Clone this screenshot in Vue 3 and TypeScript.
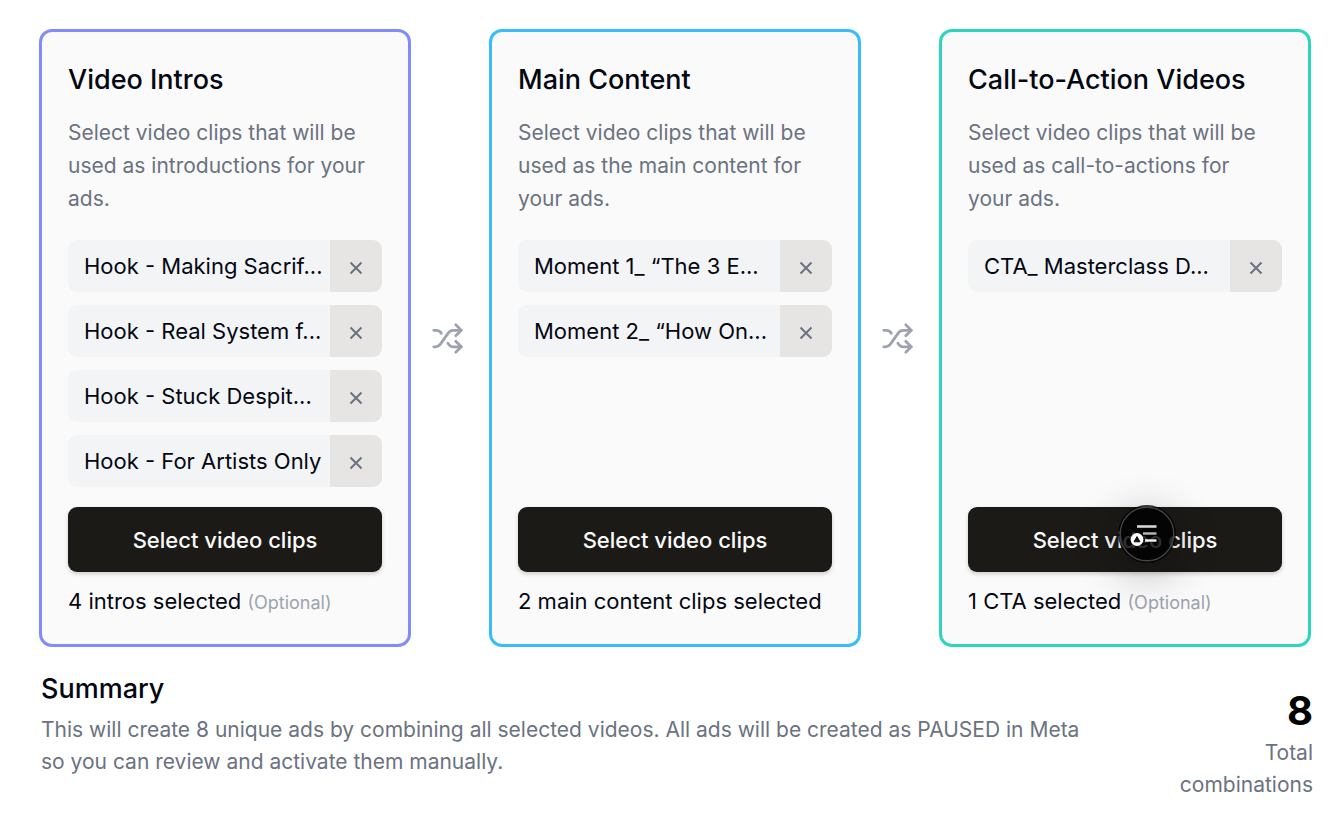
<script setup lang="ts">
interface Step {
  id: string
  title: string
  description: string
  clips: string[]
  status: string
  optional: boolean
}

const steps: Step[] = [
  {
    id: 'intro',
    title: 'Video Intros',
    description: 'Select video clips that will be used as introductions for your ads.',
    clips: [
      'Hook - Making Sacrif...',
      'Hook - Real System f...',
      'Hook - Stuck Despit...',
      'Hook - For Artists Only',
    ],
    status: '4 intros selected',
    optional: true,
  },
  {
    id: 'main',
    title: 'Main Content',
    description: 'Select video clips that will be used as the main content for your ads.',
    clips: ['Moment 1_ “The 3 E...', 'Moment 2_ “How On...'],
    status: '2 main content clips selected',
    optional: false,
  },
  {
    id: 'cta',
    title: 'Call-to-Action Videos',
    description: 'Select video clips that will be used as call-to-actions for your ads.',
    clips: ['CTA_ Masterclass D...'],
    status: '1 CTA selected',
    optional: true,
  },
]
</script>

<template>
  <main class="page">
    <div class="steps">
      <template v-for="(step, index) in steps" :key="step.id">
        <svg v-if="index > 0" class="shuffle" viewBox="0 0 24 24" aria-hidden="true">
          <path d="M2 18h1.4c1.3 0 2.5-.6 3.3-1.7l6.1-8.6c.7-1.1 2-1.7 3.3-1.7H22" />
          <path d="m18 2 4 4-4 4" />
          <path d="M2 6h1.9c1.5 0 2.9.9 3.6 2.2" />
          <path d="M22 18h-5.9c-1.3 0-2.6-.7-3.3-1.8l-.5-.8" />
          <path d="m18 14 4 4-4 4" />
        </svg>
        <section class="card" :class="step.id">
          <h2>{{ step.title }}</h2>
          <p class="description">{{ step.description }}</p>
          <ul class="clips">
            <li v-for="clip in step.clips" :key="clip" class="clip">
              <span class="clip-name">{{ clip }}</span>
              <button type="button" class="remove" :aria-label="`Remove ${clip}`">
                <svg viewBox="0 0 14 14" aria-hidden="true"><path d="M1.5 1.5l11 11M12.5 1.5l-11 11" /></svg>
              </button>
            </li>
          </ul>
          <div class="action">
            <button type="button" class="select">Select video clips</button>
            <button v-if="step.id === 'cta'" type="button" class="assistant" aria-label="Open assistant">
              <svg viewBox="0 0 58 58" aria-hidden="true">
                <circle cx="29" cy="29" r="26.8" fill="none" stroke="#444" stroke-width="1.4" />
                <path d="M19 21.5h19.5" stroke="#d6d6d6" stroke-width="2.6" />
                <path d="M25 28.5h13.5" stroke="#b8b8b8" stroke-width="2.4" />
                <path d="M27 35.5h11.5" stroke="#f4f4f4" stroke-width="2.4" />
                <circle cx="19" cy="34.5" r="6.4" fill="#fff" />
                <path d="M19 31.6l3 5.2h-6z" fill="#111" stroke="#111" stroke-width="1" stroke-linejoin="round" />
              </svg>
            </button>
          </div>
          <p class="status">
            {{ step.status }} <span v-if="step.optional" class="optional">(Optional)</span>
          </p>
        </section>
      </template>
    </div>

    <section class="summary">
      <div>
        <h2>Summary</h2>
        <p>
          This will create 8 unique ads by combining all selected videos. All ads will be created as PAUSED in Meta
          so you can review and activate them manually.
        </p>
      </div>
      <div class="total">
        <strong>8</strong>
        <span>Total combinations</span>
      </div>
    </section>
  </main>
</template>

<style>
body {
  margin: 0;
  background: #fff;
}
</style>

<style scoped>
.page {
  box-sizing: border-box;
  padding: 29px 33px 24px 39px;
  font-family: Inter, "Liberation Sans", sans-serif;
  font-size: 22px;
  line-height: 33px;
  color: #030712;
}

h2,
p,
ul {
  margin: 0;
  padding: 0;
}

button {
  border: 0;
  padding: 0;
  font: inherit;
  cursor: pointer;
}

.steps {
  display: grid;
  grid-template-columns: minmax(0, 1fr) auto minmax(0, 1fr) auto minmax(0, 1fr);
  align-items: stretch;
}

.shuffle {
  align-self: center;
  width: 33px;
  height: 33px;
  margin: 0 25px 0 20px;
  fill: none;
  stroke: #9ca3af;
  stroke-width: 2;
  stroke-linecap: round;
  stroke-linejoin: round;
}

.card {
  display: flex;
  flex-direction: column;
  padding: 26px;
  border: 3px solid;
  border-radius: 13px;
  background: #fafafa;
}

.intro {
  border-color: #818cf8;
}

.main {
  border-color: #38bdf8;
}

.cta {
  border-color: #2dd4bf;
}

h2 {
  font-size: 27px;
  font-weight: 500;
  line-height: 44px;
}

.description {
  margin-top: 14px;
  padding-right: 8px;
  color: #6b7280;
  font-size: 21px;
}

.clips {
  display: flex;
  flex: 1;
  flex-direction: column;
  gap: 13px;
  margin: 25px 0 20px;
  list-style: none;
}

.clip {
  display: flex;
  height: 52px;
  overflow: hidden;
  border-radius: 9px;
  background: #f3f4f6;
}

.clip-name {
  flex: 1;
  min-width: 0;
  padding-left: 16px;
  line-height: 52px;
  white-space: nowrap;
}

.remove {
  display: flex;
  flex: 0 0 52px;
  align-items: center;
  justify-content: center;
  padding-top: 4px;
  background: #e7e5e4;
}

.remove svg {
  width: 14px;
  height: 14px;
  fill: none;
  stroke: #6b7280;
  stroke-width: 2;
}

.action {
  position: relative;
}

.select {
  display: block;
  width: 100%;
  height: 65px;
  padding-top: 2px;
  border-radius: 9px;
  background: #1b1a17;
  box-shadow: 0 2px 4px rgb(0 0 0 / 18%);
  color: #fafafa;
  font-weight: 500;
}

.assistant {
  position: absolute;
  top: -2px;
  left: 150px;
  width: 58px;
  height: 58px;
  border-radius: 50%;
  background: rgb(0 0 0 / 82%);
  box-shadow: 0 10px 44px rgb(0 0 0 / 30%);
}

.assistant svg {
  display: block;
}

.status {
  margin-top: 13px;
}

.optional {
  color: #9ca3af;
  font-size: 18px;
  line-height: 1;
}

.summary {
  display: grid;
  grid-template-columns: minmax(0, 1fr) 137px;
  gap: 80px;
  margin: 20px -2px 0 2px;
  color: #6b7280;
  font-size: 21px;
  line-height: 32px;
}

.summary h2 {
  margin-bottom: 3px;
  color: #030712;
}

.total {
  padding-top: 22px;
  text-align: right;
}

.total strong {
  display: block;
  margin-bottom: 5px;
  color: #000;
  font-size: 40px;
  font-weight: 700;
  line-height: 43px;
}
</style>
